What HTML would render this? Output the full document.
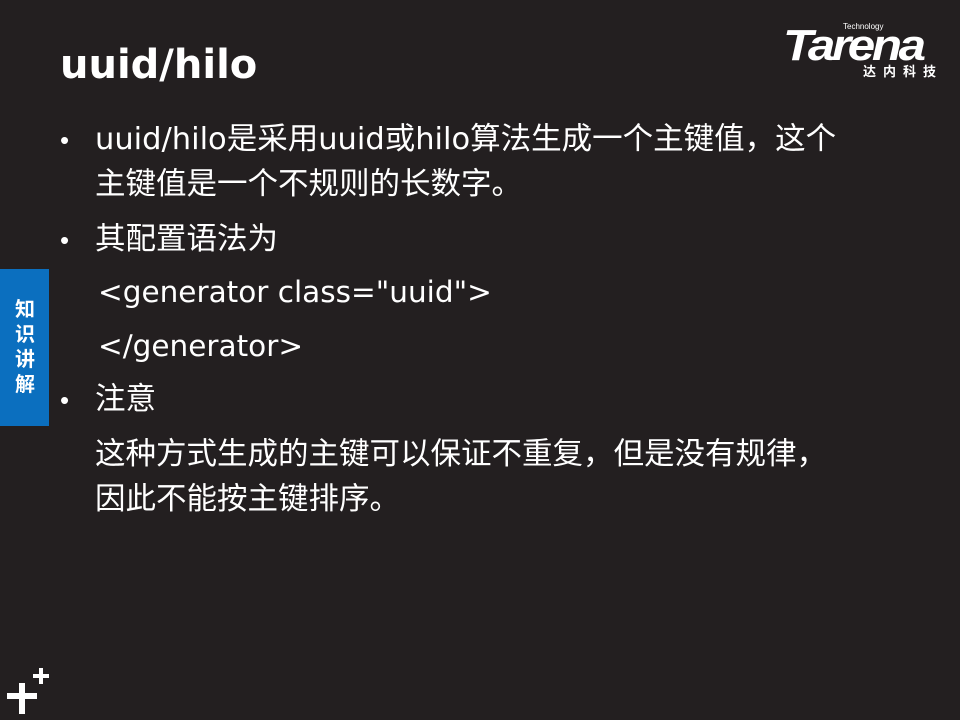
<!DOCTYPE html>
<html><head><meta charset="utf-8"><style>
body{margin:0;width:960px;height:720px;background:#231f20;position:relative;overflow:hidden;font-family:"DejaVu Sans","Noto Sans CJK SC",sans-serif;color:#fff}
.t{position:absolute;white-space:nowrap;font-size:30.5px;line-height:40px}
.b{position:absolute;left:60px;font-size:26px;line-height:40px;font-family:"Liberation Sans",sans-serif}
</style></head><body>
<div class="t" style="left:60px;top:42px;font-size:40px;font-weight:bold;line-height:46px">uuid/hilo</div>
<div style="position:absolute;left:783px;top:20px;width:170px;height:62px">
<div style="position:absolute;left:60px;top:2px;font-size:8px;font-family:'Liberation Sans',sans-serif">Technology</div>
<div style="position:absolute;left:0;top:6px;font-size:44px;font-weight:bold;font-style:italic;line-height:40px;letter-spacing:-3px;font-family:'Liberation Sans',sans-serif;transform:scaleX(1.12);transform-origin:left">Tarena</div>
<div style="position:absolute;left:80px;top:45px;font-size:13px;font-weight:bold;letter-spacing:7px;line-height:16px;white-space:nowrap">达内科技</div>
</div>
<div style="position:absolute;left:0;top:269px;width:49px;height:157px;background:#0b6fbf"></div>
<div style="position:absolute;left:13px;top:297px;width:24px;font-size:20px;font-weight:bold;line-height:25px;text-align:center">知识讲解</div>
<div class="b" style="top:120px">•</div>
<div class="t" style="left:95px;top:120px">uuid/hilo是采用uuid或hilo算法生成一个主键值，这个</div>
<div class="t" style="left:95px;top:165px">主键值是一个不规则的长数字。</div>
<div class="b" style="top:220px">•</div>
<div class="t" style="left:95px;top:220px">其配置语法为</div>
<div class="t" style="left:98px;top:272px;font-size:29.5px">&lt;generator class="uuid"&gt;</div>
<div class="t" style="left:98px;top:326px;font-size:29.5px">&lt;/generator&gt;</div>
<div class="b" style="top:380px">•</div>
<div class="t" style="left:95px;top:380px">注意</div>
<div class="t" style="left:95px;top:435px">这种方式生成的主键可以保证不重复，但是没有规律，</div>
<div class="t" style="left:95px;top:480px">因此不能按主键排序。</div>
<svg style="position:absolute;left:0;top:660px" width="60" height="60">
<path d="M7 696h30M22 683v31" transform="translate(0,-660)" stroke="#fff" stroke-width="6" fill="none"/>
<path d="M33 676h16M41 668v16" transform="translate(0,-660)" stroke="#fff" stroke-width="4" fill="none"/>
</svg>
</body></html>
